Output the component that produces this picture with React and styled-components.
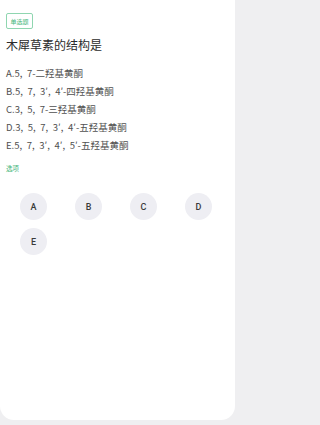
import React from 'react'
import styled, { createGlobalStyle } from 'styled-components'

const GlobalStyle = createGlobalStyle`
  html, body {
    margin: 0;
    padding: 0;
    background: #efeff1;
    font-family: "Noto Sans CJK SC", "Noto Sans", sans-serif;
  }
`

const Card = styled.div`
  width: 235px;
  height: 420px;
  background: #ffffff;
  border-radius: 0 0 14px 14px;
  box-sizing: border-box;
  padding: 13px 6px 0 6px;
  display: flex;
  flex-direction: column;
`

const Badge = styled.div`
  align-self: flex-start;
  width: 27px;
  height: 16px;
  box-sizing: border-box;
  border: 1px solid #8fd6b0;
  border-radius: 2px;
  color: #3fb57a;
  font-size: 6px;
  display: flex;
  align-items: center;
  justify-content: center;
`

const Title = styled.div`
  margin-top: 8px;
  font-size: 12px;
  line-height: 16px;
  color: #2b2b2b;
`

const OptionList = styled.div`
  margin-top: 11px;
  display: flex;
  flex-direction: column;
`

const Option = styled.div`
  font-size: 9.5px;
  line-height: 18px;
  color: #505050;
  word-spacing: 2.5px;
  white-space: nowrap;
`

const Label = styled.div`
  margin-top: 10px;
  font-size: 6.5px;
  line-height: 9px;
  color: #3fb57a;
`

const ChoiceGrid = styled.div`
  margin-top: 20px;
  display: grid;
  grid-template-columns: repeat(4, 55px);
  row-gap: 8px;
`

const Choice = styled.div`
  justify-self: center;
  width: 27px;
  height: 27px;
  border-radius: 50%;
  background: #eeeef3;
  color: #3a3a3a;
  font-family: Roboto, "Noto Sans", sans-serif;
  font-size: 9px;
  font-weight: 500;
  display: flex;
  align-items: center;
  justify-content: center;
`

const options = [
  'A.5, 7-二羟基黄酮',
  'B.5, 7, 3′, 4′-四羟基黄酮',
  'C.3, 5, 7-三羟基黄酮',
  'D.3, 5, 7, 3′, 4′-五羟基黄酮',
  'E.5, 7, 3′, 4′, 5′-五羟基黄酮',
]

export default function App() {
  return <>
    <GlobalStyle />
    <Card>
      <Badge>单选题</Badge>
      <Title>木犀草素的结构是</Title>
      <OptionList>
        {options.map(o => <Option key={o}>{o}</Option>)}
      </OptionList>
      <Label>选项</Label>
      <ChoiceGrid>
        {['A', 'B', 'C', 'D', 'E'].map(c => <Choice key={c}>{c}</Choice>)}
      </ChoiceGrid>
    </Card>
  </>
}
